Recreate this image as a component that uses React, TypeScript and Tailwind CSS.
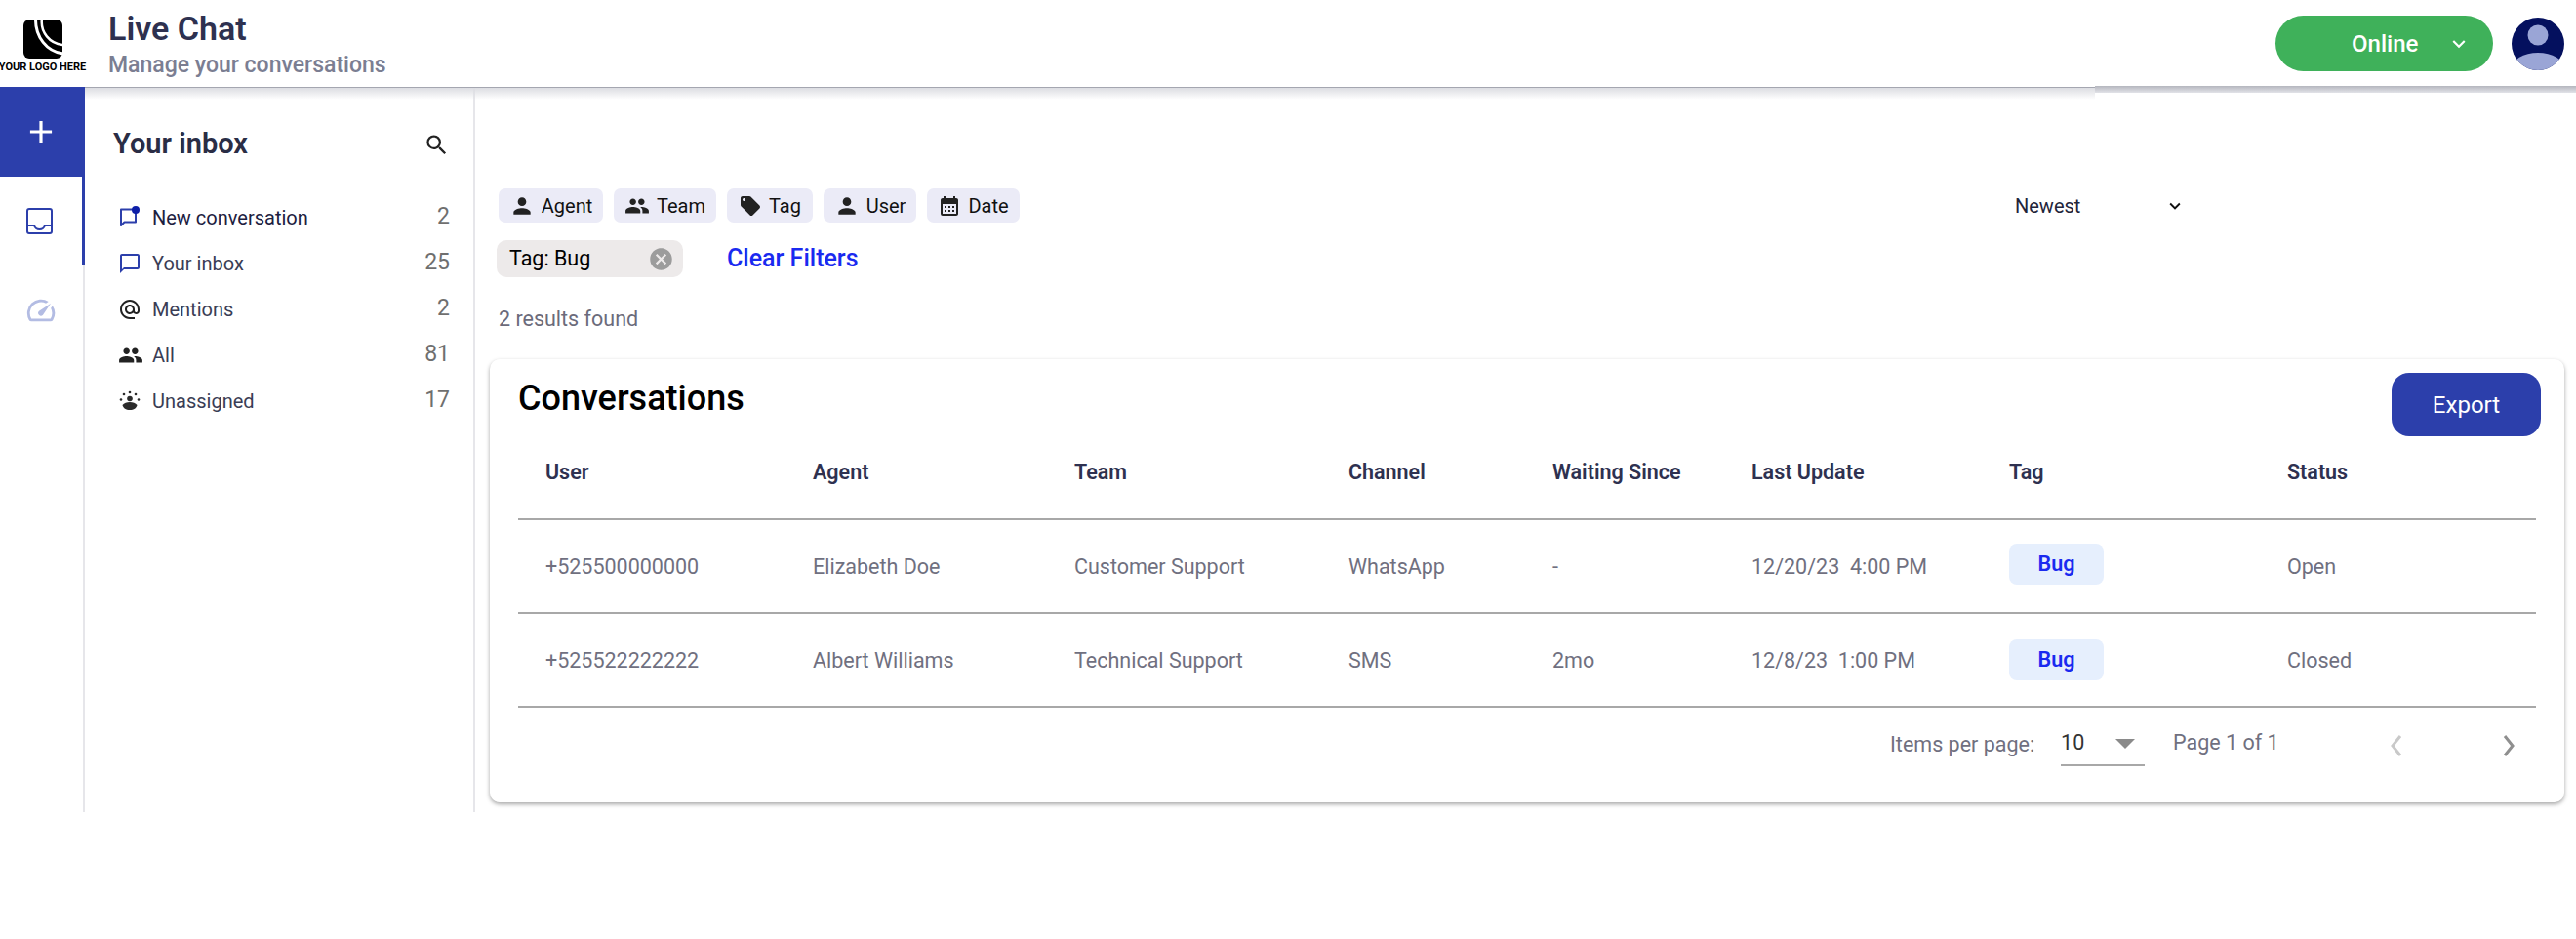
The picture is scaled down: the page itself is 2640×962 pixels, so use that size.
import React from "react";
import {
  MdAdd,
  MdAlternateEmail,
  MdCalendarMonth,
  MdCancel,
  MdChatBubbleOutline,
  MdKeyboardArrowDown,
  MdLocalOffer,
  MdOutlineSpeed,
  MdPeople,
  MdPerson,
  MdSearch,
} from "react-icons/md";

const Logo = () => (
  <svg width="40" height="40" viewBox="0 0 40 40">
    <rect width="40" height="40" rx="6" fill="#000" />
    <path d="M12.500 -1 C12 18 24 33 41 35" fill="none" stroke="#fff" strokeWidth="3" />
    <path d="M19 -1 C17 13 27 25 41 26" fill="none" stroke="#fff" strokeWidth="2.500" />
  </svg>
);

const Avatar = () => (
  <svg width="54" height="54" viewBox="0 0 54 54">
    <defs>
      <clipPath id="avatarClip">
        <ellipse cx="27" cy="27" rx="27" ry="27" />
      </clipPath>
    </defs>
    <g clipPath="url(#avatarClip)">
      <rect width="54" height="54" fill="#04105e" />
      <circle cx="27" cy="18" r="10.500" fill="#9aa5d6" />
      <ellipse cx="27" cy="52" rx="27" ry="16" fill="#9aa5d6" />
    </g>
  </svg>
);

const NewChatIcon = () => (
  <svg width="24" height="24" viewBox="0 0 24 24" fill="none">
    <path d="M3 3.500h15v13H6.500L3 20z" stroke="#2c3fab" strokeWidth="2" strokeLinejoin="round" />
    <circle cx="18" cy="4" r="4" fill="#0d1fa8" />
  </svg>
);

const InboxIcon = () => (
  <svg width="27" height="27" viewBox="0 0 27 27" fill="none" stroke="#2c3fab" strokeWidth="2">
    <rect x="1" y="1" width="25" height="25" rx="2" />
    <path d="M1 18h7c1 3 3 4 5.500 4s4.500-1 5.500-4h7" />
  </svg>
);

const UnassignedIcon = () => (
  <svg width="24" height="24" viewBox="0 0 24 24" fill="#2b2b2b">
    <circle cx="12" cy="9.500" r="2.800" />
    <path d="M4.500 16c1.500-2 4.500-3 7.500-3s6 1 7.500 3c-.6 3-3.500 5-7.500 5s-6.900-2-7.500-5z" />
    <circle cx="12" cy="3" r="1.300" />
    <circle cx="6" cy="5" r="1.300" />
    <circle cx="18" cy="5" r="1.300" />
    <circle cx="3" cy="10.500" r="1.300" />
    <circle cx="21" cy="10.500" r="1.300" />
  </svg>
);

const inboxItems = [
  { label: "New conversation", count: 2, icon: <NewChatIcon />, strong: true },
  { label: "Your inbox", count: 25, icon: <MdChatBubbleOutline className="text-[24px] text-[#2c3fab]" /> },
  { label: "Mentions", count: 2, icon: <MdAlternateEmail className="text-[24px] text-[#222]" /> },
  { label: "All", count: 81, icon: <MdPeople className="text-[26px] text-[#222]" /> },
  { label: "Unassigned", count: 17, icon: <UnassignedIcon /> },
];

const filters = [
  { label: "Agent", width: "w-[107px]", icon: <MdPerson className="text-[26px]" /> },
  { label: "Team", width: "w-[105px]", icon: <MdPeople className="text-[26px]" /> },
  { label: "Tag", width: "w-[88px]", icon: <MdLocalOffer className="text-[24px]" /> },
  { label: "User", width: "w-[95px]", icon: <MdPerson className="text-[26px]" /> },
  { label: "Date", width: "w-[95px]", icon: <MdCalendarMonth className="text-[24px]" /> },
];

const rows = [
  ["+525500000000", "Elizabeth Doe", "Customer Support", "WhatsApp", "-", "12/20/23  4:00 PM", "Bug", "Open"],
  ["+525522222222", "Albert Williams", "Technical Support", "SMS", "2mo", "12/8/23  1:00 PM", "Bug", "Closed"],
];

const headers = ["User", "Agent", "Team", "Channel", "Waiting Since", "Last Update", "Tag", "Status"];

const gridCols = "grid grid-cols-[302px_268px_281px_209px_204px_264px_285px_255px]";

export default function App() {
  return (
    <div className="w-[2640px] h-[962px] bg-white overflow-hidden font-['Roboto',sans-serif]">
      <header className="relative z-10 h-[89px] flex items-center bg-white">
        {/* header shadow: soft fade on the left, flat band on the right */}
        <div className="absolute left-0 top-full w-[2147px] h-[13px] border-t border-[#a4a6b0] bg-gradient-to-b from-[#dcdde2] to-transparent" />
        <div className="absolute left-[2147px] right-0 top-[88px] h-[7px] bg-gradient-to-b from-[#b4b6be] to-[#e2e3e8]" />
        <div className="w-[87px] flex flex-col items-center pt-[6px]">
          <Logo />
          <span className="mt-[2px] text-[11px] leading-[14px] font-bold text-black whitespace-nowrap">YOUR LOGO HERE</span>
        </div>
        <div className="ml-[24px] mt-[1px]">
          <h1 className="text-[34px] leading-[38px] font-semibold text-[#2e3150]">Live Chat</h1>
          <p className="mt-[6px] text-[23px] leading-[26px] font-medium text-[#7b7e92]">Manage your conversations</p>
        </div>
        <div className="ml-auto mr-[12px] flex items-center gap-[19px]">
          <button className="w-[223px] h-[57px] rounded-full bg-[#3fb15a] flex items-center text-white text-[24px] font-medium pl-[78px]">
            Online
            <MdKeyboardArrowDown className="ml-[29px] text-[26px]" />
          </button>
          <Avatar />
        </div>
      </header>

      <div className="flex h-[743px]">
        <nav className="w-[87px] shrink-0 border-r-2 border-[#e6e6ea] flex flex-col">
          <button className="relative z-20 h-[92px] -mr-[2px] bg-[#2c3fab] flex items-center justify-center pr-[4px] text-white">
            <MdAdd className="text-[38px]" />
          </button>
          <div className="h-[91px] -mr-[2px] border-r-[3px] border-[#2c3fab] flex items-center justify-center pr-[4px]">
            <InboxIcon />
          </div>
          <div className="h-[92px] flex items-center justify-center pr-[2px] text-[#b3bce3]">
            <MdOutlineSpeed className="text-[34px]" />
          </div>
        </nav>

        <aside className="w-[400px] shrink-0 border-r-2 border-[#e6e6ea] pl-[29px] pr-[24px]">
          <div className="mt-[39px] h-[40px] flex items-center justify-between">
            <h2 className="text-[29px] font-semibold text-[#2a2d45]">Your inbox</h2>
            <MdSearch className="text-[27px] text-[#222]" />
          </div>
          <ul className="mt-[31px]">
            {inboxItems.map((item) => (
              <li key={item.label} className="h-[47px] flex items-center">
                <span className="w-[40px] pl-[5px] flex items-center">{item.icon}</span>
                <span className={`text-[20px] ${item.strong ? "text-[#1c2040]" : "text-[#3a3d55]"}`}>{item.label}</span>
                <span className="ml-auto text-[23px] text-[#6f6f6f]">{item.count}</span>
              </li>
            ))}
          </ul>
        </aside>

        <main className="flex-1 pl-[24px] pr-[14px] pt-[104px]">
          <div className="flex items-center justify-between pr-[388px]">
            <div className="flex gap-[11px]">
              {filters.map((filter) => (
                <div
                  key={filter.label}
                  className={`${filter.width} h-[35px] rounded-[7px] bg-[#ebebf7] flex items-center justify-center gap-[7px] text-[20px] text-[#111]`}
                >
                  <span className="text-[#222]">{filter.icon}</span>
                  {filter.label}
                </div>
              ))}
            </div>
            <div className="w-[175px] flex items-center justify-between text-[20px] text-[#22243a]">
              Newest
              <MdKeyboardArrowDown className="text-[22px] text-[#111]" />
            </div>
          </div>

          <div className="mt-[18px] flex items-center">
            <div className="-ml-[2px] w-[191px] h-[38px] rounded-[10px] bg-[#edeaea] flex items-center justify-between pl-[13px] pr-[9px] text-[21.5px] text-black">
              Tag: Bug
              <MdCancel className="text-[27px] text-[#9c9c9c]" />
            </div>
            <a href="#" className="ml-[45px] text-[25px] font-medium text-[#1a2af0]">Clear Filters</a>
          </div>

          <p className="mt-[31px] text-[21.5px] leading-[24px] text-[#6b6b7b]">2 results found</p>

          <section className="mt-[29px] -ml-[9px] h-[454px] rounded-[10px] bg-white px-[29px] shadow-[0_2px_4px_rgba(0,0,0,0.35)]">
            <div className="pt-[14px] flex justify-between">
              <h2 className="pt-[4px] text-[36px] leading-[44px] font-medium text-black">Conversations</h2>
              <button className="-mr-[5px] w-[153px] h-[65px] rounded-[18px] bg-[#2c3fab] text-[24px] text-white">Export</button>
            </div>

            <div className={`${gridCols} h-[86px] pb-[9px] items-center border-b-2 border-[#a8a8a8] text-[21.5px] font-semibold text-[#2e3150]`}>
              {headers.map((header, i) => (
                <div key={header} className={i === 0 ? "pl-[28px]" : ""}>{header}</div>
              ))}
            </div>

            {rows.map((row, rowIndex) => (
              <div key={row[0]} className={`${gridCols} h-[96px] items-center border-b-2 border-[#a8a8a8] text-[21.5px] text-[#70707f]`}>
                {row.map((cell, i) =>
                  i === 6 ? (
                    <div key={i} className={rowIndex === 0 ? "-mt-[4px]" : ""}>
                      <span className="w-[97px] h-[42px] rounded-[8px] bg-[#e6effd] flex items-center justify-center font-semibold text-[#1a2af0]">{cell}</span>
                    </div>
                  ) : (
                    <div key={i} className={`whitespace-pre pt-[3px] ${i === 0 ? "pl-[28px]" : ""}`}>{cell}</div>
                  )
                )}
              </div>
            ))}

            <div className="h-[77px] flex items-center text-[21.5px] text-[#70707f]">
              <span className="ml-[1406px]">Items per page:</span>
              <div className="ml-[27px] w-[86px] h-[44px] -mt-[2px] border-b-2 border-[#a8a8a8] flex items-center justify-between pr-[10px] text-[#333]">
                10
                <svg width="20" height="10" viewBox="0 0 20 10"><path d="M0 0h20L10 10z" fill="#8a8a8a" /></svg>
              </div>
              <span className="ml-[29px] -mt-[4px]">Page 1 of 1</span>
              <svg className="ml-[112px]" width="16" height="24" viewBox="0 0 16 24" fill="none"><path d="M12 2 4 12l8 10" stroke="#c9c9c9" strokeWidth="3" /></svg>
              <svg className="ml-[99px]" width="16" height="24" viewBox="0 0 16 24" fill="none"><path d="m4 2 8 10-8 10" stroke="#8f8f8f" strokeWidth="3" /></svg>
            </div>
          </section>
        </main>
      </div>
    </div>
  );
}
